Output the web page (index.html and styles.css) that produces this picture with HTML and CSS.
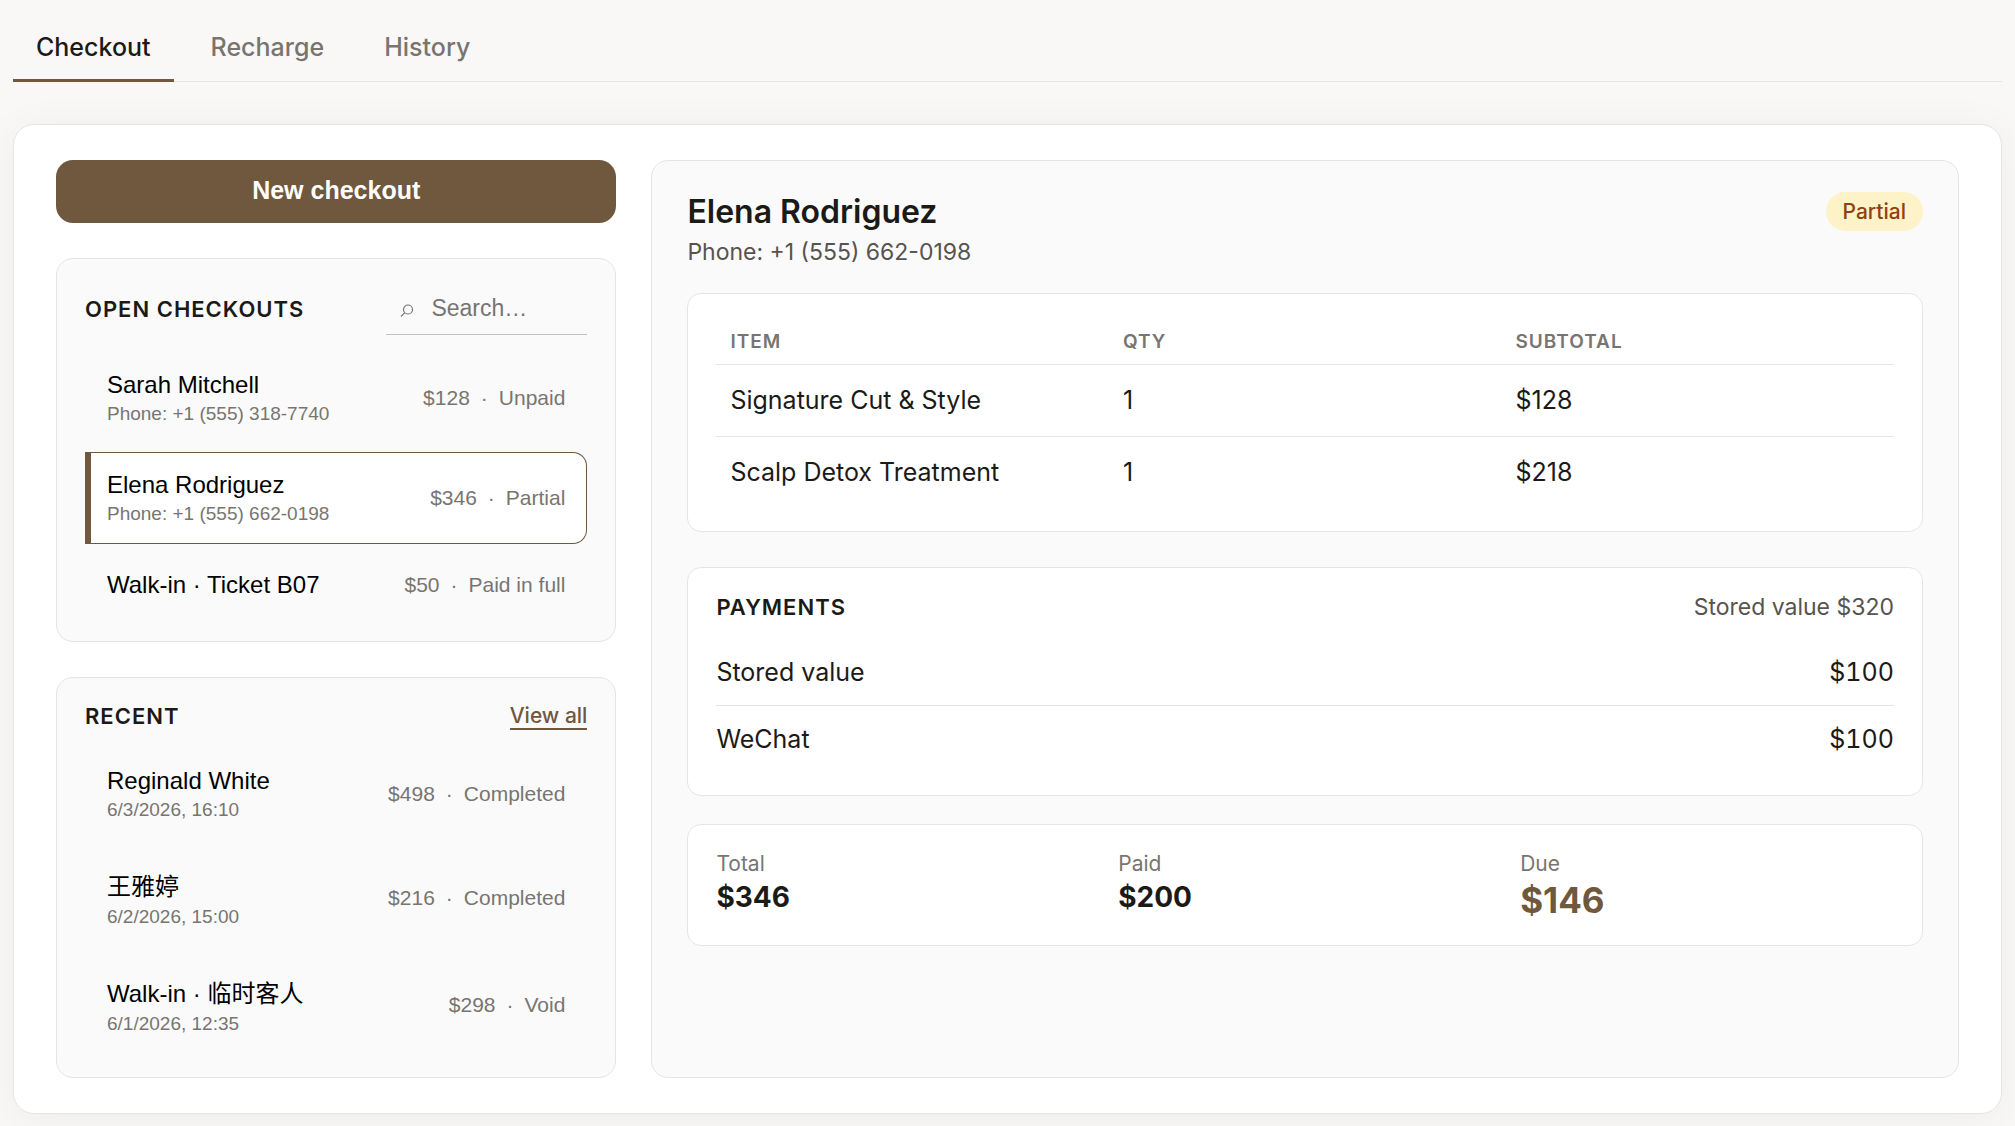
FILE: index.html
```html
<!DOCTYPE html>
<html lang="en">
<head>
<meta charset="utf-8">
<meta name="viewport" content="width=device-width, initial-scale=1">
<title>Checkout</title>
<link rel="stylesheet" href="styles.css">
</head>
<body>
<nav class="tabs">
  <a class="tab tab-active" href="#checkout" aria-current="page">Checkout</a>
  <a class="tab" href="#recharge">Recharge</a>
  <a class="tab" href="#history">History</a>
</nav>

<main class="workspace">
  <div class="sidebar">
    <button class="primary" type="button">New checkout</button>

    <section class="panel">
      <div class="panel-head">
        <h2 class="heading">Open checkouts</h2>
        <label class="search">
          <svg class="search-icon" viewBox="0 0 14 14" aria-hidden="true"><circle cx="8" cy="5.5" r="4.5"/><path d="M4.8 8.7L1 12.5"/></svg>
          <input class="search-input" type="search" placeholder="Search…" aria-label="Search open checkouts">
        </label>
      </div>
      <div class="list">
        <button class="row" type="button">
          <span class="who"><span class="name">Sarah Mitchell</span><span class="sub">Phone: +1 (555) 318-7740</span></span>
          <span class="meta"><span>$128</span><span>·</span><span>Unpaid</span></span>
        </button>
        <button class="row row-selected" type="button" aria-pressed="true">
          <span class="who"><span class="name">Elena Rodriguez</span><span class="sub">Phone: +1 (555) 662-0198</span></span>
          <span class="meta"><span>$346</span><span>·</span><span>Partial</span></span>
        </button>
        <button class="row" type="button">
          <span class="who"><span class="name">Walk-in · Ticket B07</span></span>
          <span class="meta"><span>$50</span><span>·</span><span>Paid in full</span></span>
        </button>
      </div>
    </section>

    <section class="panel">
      <div class="panel-head">
        <h2 class="heading">Recent</h2>
        <a class="view-all" href="#history">View all</a>
      </div>
      <div class="list">
        <button class="row" type="button">
          <span class="who"><span class="name">Reginald White</span><span class="sub">6/3/2026, 16:10</span></span>
          <span class="meta"><span>$498</span><span>·</span><span>Completed</span></span>
        </button>
        <button class="row" type="button">
          <span class="who"><span class="name" lang="zh">王雅婷</span><span class="sub">6/2/2026, 15:00</span></span>
          <span class="meta"><span>$216</span><span>·</span><span>Completed</span></span>
        </button>
        <button class="row" type="button">
          <span class="who"><span class="name">Walk-in · <span lang="zh">临时客人</span></span><span class="sub">6/1/2026, 12:35</span></span>
          <span class="meta"><span>$298</span><span>·</span><span>Void</span></span>
        </button>
      </div>
    </section>
  </div>

  <section class="detail">
    <header class="detail-head">
      <div>
        <h1 class="customer">Elena Rodriguez</h1>
        <p class="phone">Phone: +1 (555) 662-0198</p>
      </div>
      <span class="badge">Partial</span>
    </header>

    <div class="card items-card">
      <table class="items">
        <thead><tr><th scope="col">Item</th><th scope="col">Qty</th><th scope="col">Subtotal</th></tr></thead>
        <tbody>
          <tr><td>Signature Cut &amp; Style</td><td>1</td><td>$128</td></tr>
          <tr><td>Scalp Detox Treatment</td><td>1</td><td>$218</td></tr>
        </tbody>
      </table>
    </div>

    <div class="card payments-card">
      <div class="panel-head">
        <h2 class="heading">Payments</h2>
        <span class="balance">Stored value $320</span>
      </div>
      <ul class="payments">
        <li class="payment"><span>Stored value</span><span class="amount">$100</span></li>
        <li class="payment"><span>WeChat</span><span class="amount">$100</span></li>
      </ul>
    </div>

    <dl class="card totals">
      <div><dt>Total</dt><dd>$346</dd></div>
      <div><dt>Paid</dt><dd>$200</dd></div>
      <div><dt>Due</dt><dd class="due">$146</dd></div>
    </dl>
  </section>
</main>
</body>
</html>
```
FILE: styles.css
```css
:root {
  --brown: #6f583d;
  --ink: #1c1a17;
  --muted: #787571;
  --line: #e7e5e4;
  --soft: #fafafa;
}

* { box-sizing: border-box; }

body {
  margin: 0;
  padding: 12px 13px;
  background: #faf8f6;
  color: var(--ink);
  font: 25px/36px Inter, "Noto Sans CJK SC", sans-serif;
}

h1, h2, p, ul, dl, dd { margin: 0; padding: 0; }

.tabs {
  display: flex;
  gap: 14px;
  border-bottom: 1px solid var(--line);
}
.tab {
  margin-bottom: -1px;
  padding: 17px 23px 14px;
  border-bottom: 3px solid transparent;
  color: var(--muted);
  font-weight: 500;
  text-decoration: none;
}
.tab-active { border-color: var(--brown); color: var(--ink); }

.workspace {
  display: grid;
  grid-template-columns: minmax(0, 3fr) minmax(0, 7fr);
  gap: 35px;
  margin-top: 42px;
  padding: 35px 42px;
  border: 1px solid var(--line);
  border-radius: 21px;
  background: #fff;
  box-shadow: 0 4px 40px rgba(0, 0, 0, .05);
}

.sidebar { display: flex; flex-direction: column; gap: 35px; }

.primary {
  height: 63px;
  padding: 0 0 2px;
  border: 0;
  border-radius: 17px;
  background: var(--brown);
  color: #fff;
  font: bold 25px "Liberation Sans", sans-serif;
}

.panel {
  padding: 23px 28px;
  border: 1px solid var(--line);
  border-radius: 17px;
  background: var(--soft);
}
.panel-head {
  display: flex;
  align-items: center;
  justify-content: space-between;
  margin-bottom: 17px;
}
.heading {
  font-size: 22px;
  font-weight: 600;
  line-height: 30px;
  letter-spacing: 1px;
  text-transform: uppercase;
}

.search {
  display: flex;
  align-items: center;
  gap: 17px;
  width: 40%;
  height: 53px;
  padding: 0 14px;
  border-bottom: 1px solid #c4c1bd;
}
.search-icon {
  flex: none;
  width: 14px;
  height: 14px;
  margin-top: 6px;
  fill: none;
  stroke: var(--muted);
  stroke-width: 1.2;
}
.search-input {
  width: 100%;
  min-width: 0;
  padding: 0;
  border: 0;
  outline: 0;
  background: none;
  font: 23px "Liberation Sans", sans-serif;
}
.search-input::placeholder { color: #757575; }

.list { display: flex; flex-direction: column; gap: 8px; }
.row {
  display: flex;
  align-items: center;
  justify-content: space-between;
  padding: 18px 21px 18px 16px;
  border: 1px solid transparent;
  border-left-width: 6px;
  border-radius: 0 14px 14px 0;
  background: none;
  color: #000;
  font: 24px "Liberation Sans", "Noto Sans CJK SC", sans-serif;
  text-align: left;
}
.row-selected { border-color: var(--brown); background: #fff; }
.who { display: flex; flex-direction: column; gap: 4px; }
.sub { color: var(--muted); font-size: 19px; }
.meta { display: flex; gap: 11px; color: var(--muted); font-size: 21px; }

.view-all {
  border-bottom: 2px solid var(--brown);
  color: var(--brown);
  font-size: 21px;
  font-weight: 500;
  line-height: 25px;
  text-decoration: none;
}

.detail {
  padding: 28px 35px;
  border: 1px solid var(--line);
  border-radius: 17px;
  background: var(--soft);
}
.detail-head {
  display: flex;
  align-items: flex-start;
  justify-content: space-between;
  margin-bottom: 24px;
}
.customer { font-size: 32px; font-weight: 600; line-height: 46px; }
.phone { color: #57534e; font-size: 23px; line-height: 34px; }
.badge {
  margin-top: 3px;
  padding: 0 17px;
  border-radius: 20px;
  background: #fdf2c8;
  color: #92400e;
  font-size: 21px;
  font-weight: 500;
  line-height: 39px;
}

.card {
  padding: 24px 28px 23px;
  border: 1px solid var(--line);
  border-radius: 14px;
  background: #fff;
}
.items-card { margin-bottom: 35px; }
.payments-card { margin-bottom: 28px; }

.items { width: 100%; border-collapse: collapse; table-layout: fixed; }
.items th {
  padding: 10px 14px 8px;
  border-bottom: 1px solid var(--line);
  color: var(--muted);
  font-size: 19px;
  font-weight: 600;
  line-height: 28px;
  letter-spacing: 1px;
  text-align: left;
  text-transform: uppercase;
}
.items td { padding: 17px 14px 18px; }
.items tr + tr td { border-top: 1px solid var(--line); }

.balance { color: #57534e; font-size: 23px; line-height: 30px; }
.payments { list-style: none; }
.payment { display: flex; justify-content: space-between; padding: 15px 0; }
.payment + .payment { border-top: 1px solid var(--line); }
.amount { font-variant-numeric: tabular-nums; }

.totals { display: grid; grid-template-columns: repeat(3, minmax(0, 1fr)); gap: 28px; }
.totals dt { color: var(--muted); font-size: 21px; line-height: 30px; }
.totals dd { font-size: 28px; font-weight: 700; }
.totals .due { color: var(--brown); font-size: 35px; line-height: 43px; }
```
